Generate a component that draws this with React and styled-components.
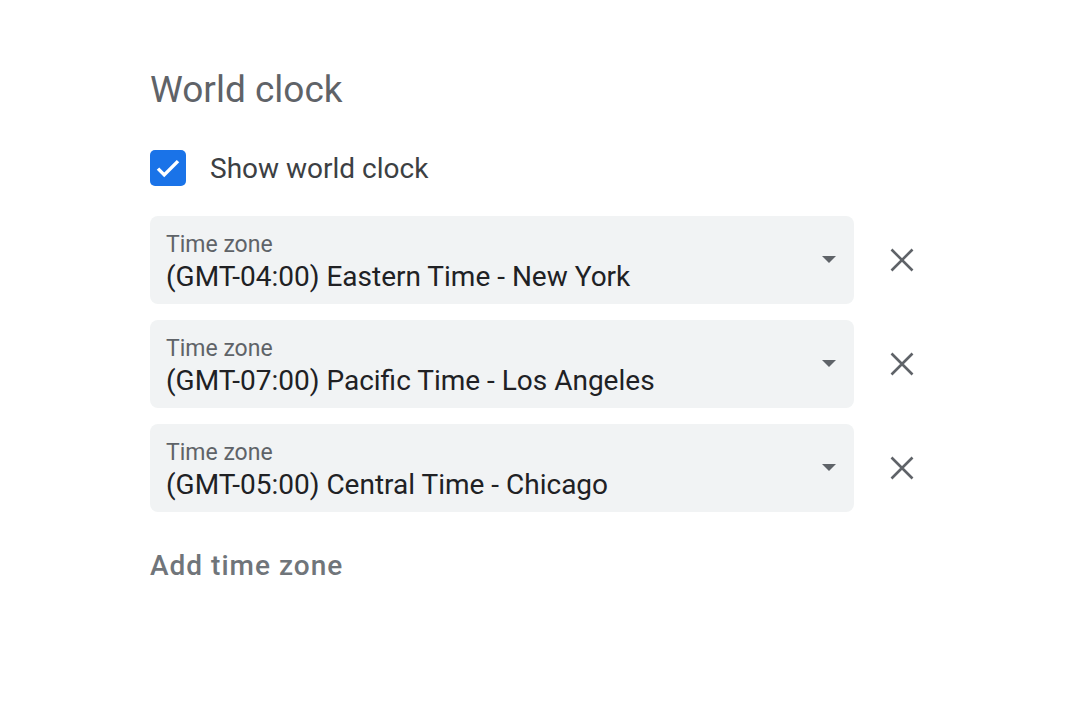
import React from 'react'
import styled, { createGlobalStyle } from 'styled-components';

const Global = createGlobalStyle`
    body {
        margin:0;
        background:#fff;
        font-family:Roboto, "Liberation Sans", sans-serif;
    }
`;

const Page = styled.div`
    padding:66px 0 0 150px;
    width:800px;
`;

const Title = styled.h2`
    margin:0 0 36px;
    font-size:37px;
    font-weight:400;
    color:#5f6368;
    line-height:48px;
`;

const CheckRow = styled.label`
    display:flex;
    align-items:center;
    gap:24px;
    margin-bottom:30px;
    font-size:28px;
    color:#3c4043;
`;

const Box = styled.span`
    width:36px;
    height:36px;
    border-radius:5px;
    background:#1a73e8;
    display:flex;
    align-items:center;
    justify-content:center;
`;

const List = styled.div`
    display:flex;
    flex-direction:column;
    gap:16px;
`;

const Row = styled.div`
    display:flex;
    align-items:center;
    gap:24px;
`;

const Select = styled.div`
    flex:0 0 704px;
    height:88px;
    box-sizing:border-box;
    background:#f1f3f4;
    border-radius:8px;
    padding:15px 16px 0;
    position:relative;
`;

const Label = styled.div`
    font-size:23px;
    line-height:28px;
    color:#5f6368;
`;

const Value = styled.div`
    font-size:28px;
    line-height:36px;
    color:#202124;
`;

const Arrow = styled.span`
    position:absolute;
    right:18px;
    top:40px;
    width:0;
    height:0;
    border-left:7px solid transparent;
    border-right:7px solid transparent;
    border-top:7px solid #5f6368;
`;

const Remove = styled.button`
    width:48px;
    height:48px;
    border:none;
    background:none;
    padding:0;
    display:flex;
    align-items:center;
    justify-content:center;
    cursor:pointer;
`;

const AddLink = styled.div`
    margin-top:37px;
    font-size:28px;
    font-weight:500;
    color:#70757a;
    letter-spacing:1px;
`;

const zones = [
    '(GMT-04:00) Eastern Time - New York',
    '(GMT-07:00) Pacific Time - Los Angeles',
    '(GMT-05:00) Central Time - Chicago',
];

const App = () => {
  return (
    <Page>
        <Global/>
        <Title>World clock</Title>
        <CheckRow>
            <Box>
                <svg width="30" height="30" viewBox="0 0 24 24">
                    <path d="M4 12.5l5 5 11-11" fill="none" stroke="#fff" strokeWidth="2.8"/>
                </svg>
            </Box>
            Show world clock
        </CheckRow>
        <List>
            {zones.map(z => (
                <Row key={z}>
                    <Select>
                        <Label>Time zone</Label>
                        <Value>{z}</Value>
                        <Arrow/>
                    </Select>
                    <Remove aria-label="Remove">
                        <svg width="24" height="24" viewBox="0 0 24 24">
                            <path d="M1.5 1.5l21 21M22.5 1.5l-21 21" stroke="#5f6368" strokeWidth="2.6"/>
                        </svg>
                    </Remove>
                </Row>
            ))}
        </List>
        <AddLink>Add time zone</AddLink>
    </Page>
  )
}

export default App
